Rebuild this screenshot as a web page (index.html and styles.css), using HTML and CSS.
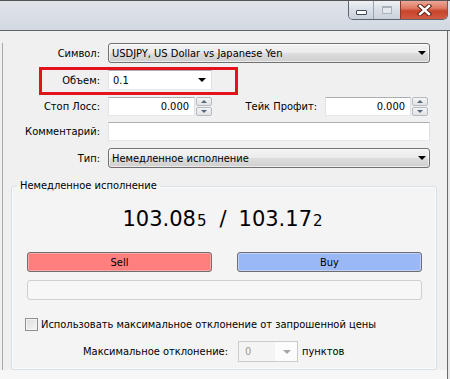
FILE: index.html
```html
<!DOCTYPE html>
<html lang="ru">
<head>
<meta charset="utf-8">
<title>Ордер</title>
<link rel="stylesheet" href="styles.css">
</head>
<body>
<div class="titlebar">
  <div class="caption">
    <div class="cap cap-min"><span class="g-min"></span></div>
    <div class="cap cap-max"><span class="g-max"></span></div>
    <div class="cap cap-close">
      <svg width="15" height="12" viewBox="0 0 15 12"><path d="M3 2 L12 10 M12 2 L3 10" stroke="#5a2418" stroke-width="4.4" stroke-linecap="square"/><path d="M3 2 L12 10 M12 2 L3 10" stroke="#ffffff" stroke-width="2.4" stroke-linecap="square"/></svg>
    </div>
  </div>
</div>
<div class="window">
  <div class="form">
    <div class="row r1">
      <span class="lbl">Символ:</span>
      <div class="combo combo-wide"><span class="ctext">USDJPY, US Dollar vs Japanese Yen</span><span class="arrow"></span></div>
    </div>
    <div class="row r2 highlight">
      <span class="lbl">Объем:</span>
      <div class="edit-combo"><span class="ctext">0.1</span><span class="arrow"></span></div>
    </div>
    <div class="row r3">
      <span class="lbl">Стоп Лосс:</span>
      <div class="spin-field sl"><div class="num">0.000</div><div class="spin"><span class="sp up"><i></i></span><span class="sp down"><i></i></span></div></div>
      <span class="lbl lbl-tp">Тейк Профит:</span>
      <div class="spin-field tp"><div class="num">0.000</div><div class="spin"><span class="sp up"><i></i></span><span class="sp down"><i></i></span></div></div>
    </div>
    <div class="row r4">
      <span class="lbl">Комментарий:</span>
      <div class="text-field"></div>
    </div>
    <div class="row r5">
      <span class="lbl">Тип:</span>
      <div class="combo combo-wide"><span class="ctext">Немедленное исполнение</span><span class="arrow"></span></div>
    </div>
  </div>
  <fieldset class="group">
    <legend>Немедленное исполнение</legend>
    <div class="price">103.08<small>5</small><span class="sep">/</span>103.17<small>2</small></div>
    <div class="trade-buttons">
      <button class="btn sell">Sell</button>
      <button class="btn buy">Buy</button>
    </div>
    <div class="status-bar"></div>
    <div class="check-row"><span class="checkbox"></span><span>Использовать максимальное отклонение от запрошенной цены</span></div>
    <div class="dev-row">
      <span class="dev-lbl">Максимальное отклонение:</span>
      <div class="combo-disabled"><span class="ctext">0</span><span class="arrow"></span></div>
      <span class="units">пунктов</span>
    </div>
  </fieldset>
</div>
</body>
</html>
```

FILE: styles.css
```css
*, *::before, *::after { box-sizing: border-box; }

body {
  margin: 0;
  width: 450px;
  height: 379px;
  overflow: hidden;
  background: #e8e8e8;
  font-family: "DejaVu Sans Condensed", "DejaVu Sans", sans-serif;
  font-size: 11px;
  color: #000;
}

/* ---------- title bar ---------- */
.titlebar {
  height: 31px;
  border-top: 1px solid #555;
  border-bottom: 1px solid #5e646c;
  background: linear-gradient(#dfe4ea, #d3d9e1);
  display: flex;
  justify-content: flex-end;
  align-items: flex-start;
  padding-right: 2px;
}

.caption {
  display: flex;
  height: 19px;
  border: 1px solid #5d6670;
  border-top: none;
  border-radius: 0 0 5px 5px;
  overflow: hidden;
}

.cap {
  display: flex;
  justify-content: center;
  height: 100%;
}

.cap-min {
  width: 25px;
  align-items: flex-end;
  padding-bottom: 4px;
  background: linear-gradient(#eef1f4, #d9dfe6 50%, #c9d1da);
  border-right: 1px solid #9aa3ad;
}

.g-min {
  width: 11px;
  height: 5px;
  background: #fff;
  border: 1px solid #3f4a56;
  border-radius: 1px;
}

.cap-max {
  width: 27px;
  align-items: center;
  background: linear-gradient(#eef1f4, #d9dfe6 50%, #c9d1da);
  border-right: 1px solid #8a3a2c;
}

.g-max {
  width: 10px;
  height: 8px;
  border: 1px solid #a9b1ba;
  border-top-width: 2px;
  background: #e4e8ec;
}

.cap-close {
  width: 46px;
  align-items: center;
  background: linear-gradient(#eba898 0%, #df7a63 40%, #c9442c 55%, #d25a42 100%);
}

/* ---------- window body ---------- */
.window {
  width: 448px;
  height: 348px;
  border-right: 1px solid #6b6b6b;
  padding: 12px 0 0 3px;
  background:
    linear-gradient(#a9a9a9, #a9a9a9) no-repeat 2px 12px / 1px 327px,
    linear-gradient(#f7f7f7, #f7f7f7) no-repeat 0 339px / 100% 10px,
    #f0f0f0;
}

.form {
  display: flex;
  flex-direction: column;
}

.row {
  display: flex;
  align-items: center;
}

.lbl {
  flex: none;
  width: 97px;
  text-align: right;
  margin-right: 8px;
}

.r1 { height: 20px; }
.r2 { height: 20px; margin-top: 7px; position: relative; }
.r3 { height: 19px; margin-top: 7px; }
.r4 { height: 19px; margin-top: 6px; }
.r5 { height: 20px; margin-top: 7px; }

.highlight::before {
  content: "";
  position: absolute;
  left: 36px;
  top: -3px;
  width: 199px;
  height: 28px;
  border: 3px solid #e3121b;
}

.combo {
  display: flex;
  align-items: center;
  height: 20px;
  border: 1px solid #707070;
  border-radius: 3px;
  padding-left: 3px;
  background: linear-gradient(#f3f3f3 0%, #ebebeb 50%, #dddddd 51%, #cfcfcf 100%);
  box-shadow: inset 0 0 0 1px rgba(255,255,255,0.6);
}

.combo-wide { width: 322px; }

.arrow {
  margin-left: auto;
  margin-right: 3px;
  width: 0;
  height: 0;
  border-left: 4px solid transparent;
  border-right: 4px solid transparent;
  border-top: 4px solid #000;
}

.edit-combo {
  display: flex;
  align-items: center;
  width: 104px;
  height: 20px;
  padding-left: 4px;
  background: #fff;
  border: 1px solid #abadb3;
  border-color: #abadb3 #dbdfe6 #e3e9ef #e2e3ea;
}

.edit-combo .arrow { margin-right: 5px; }

.spin-field {
  display: flex;
  height: 19px;
}

.spin-field.sl { width: 104px; }
.spin-field.tp { width: 103px; }

.num {
  flex: 1;
  background: #fff;
  border: 1px solid #abadb3;
  border-color: #abadb3 #dbdfe6 #e3e9ef #e2e3ea;
  text-align: right;
  padding-right: 5px;
  line-height: 17px;
}

.spin {
  width: 16px;
  margin-left: 1px;
  display: flex;
  flex-direction: column;
  gap: 1px;
}

.sp {
  flex: 1;
  display: flex;
  align-items: center;
  justify-content: center;
  border: 1px solid #b6bcc6;
  border-radius: 2px;
  background: linear-gradient(#f4f4f4, #e2e2e2);
}

.sp i {
  width: 0;
  height: 0;
  border-left: 3px solid transparent;
  border-right: 3px solid transparent;
}

.up i { border-bottom: 3px solid #56657a; }
.down i { border-top: 3px solid #56657a; }

.lbl-tp { width: 105px; }

.text-field {
  width: 322px;
  height: 19px;
  background: #fff;
  border: 1px solid #abadb3;
  border-color: #abadb3 #dbdfe6 #e3e9ef #e2e3ea;
}

/* ---------- group ---------- */
.group {
  margin: 11px 0 0 8px;
  padding: 0;
  width: 426px;
  height: 191px;
  border: 1px solid #d5dfe5;
  border-radius: 3px;
  background: #f4f4f4;
  box-shadow: inset 0 0 0 1px #fbfbfb;
  min-width: 0;
}

.group legend {
  margin-left: 5px;
  padding: 0 3px;
  line-height: 14px;
  font-size: 11px;
}

.price {
  margin-top: 12px;
  height: 28px;
  line-height: 28px;
  text-align: center;
  font-family: "DejaVu Sans", sans-serif;
  font-size: 21px;
  padding-right: 3px;
}

.price small {
  font-size: 15px;
  margin-left: 1px;
}

.price .sep {
  padding: 0 12px 0 13px;
}

.trade-buttons {
  display: flex;
  gap: 25px;
  margin: 19px 0 0 15px;
}

.btn {
  width: 185px;
  height: 20px;
  padding: 0;
  border: 1px solid #6f6f6f;
  border-radius: 3px;
  font-family: inherit;
  font-size: 11px;
  color: #000;
}

.sell {
  background: #ff7f7f;
  box-shadow: inset 0 0 0 1px #ffa5a5;
}

.buy {
  background: #9bb8f6;
  box-shadow: inset 0 0 0 1px #bfd1fa;
}

.status-bar {
  margin: 8px 0 0 15px;
  width: 395px;
  height: 20px;
  border: 1px solid #cfcfcf;
  border-radius: 3px;
  background: #f7f7f7;
}

.check-row {
  display: flex;
  align-items: center;
  height: 14px;
  margin: 17px 0 0 13px;
}

.checkbox {
  flex: none;
  width: 13px;
  height: 13px;
  margin-right: 3px;
  border: 1px solid #8e8f8f;
  background: linear-gradient(135deg, #dcdcdc, #f6f6f6);
  box-shadow: inset 0 0 0 1px #f4f4f4;
}

.dev-row {
  display: flex;
  align-items: center;
  height: 21px;
  margin-top: 10px;
}

.dev-lbl {
  width: 216px;
  text-align: right;
  margin-right: 10px;
}

.combo-disabled {
  display: flex;
  align-items: center;
  width: 60px;
  height: 21px;
  padding-left: 6px;
  border: 1px solid #cbcbcb;
  background: linear-gradient(90deg, #f4f4f4 0 36px, #fcfcfc 36px);
  color: #9a9a9a;
}

.combo-disabled .arrow {
  margin-right: 6px;
  border-top-color: #a6a6a6;
}

.units {
  margin-left: 4px;
}
```
